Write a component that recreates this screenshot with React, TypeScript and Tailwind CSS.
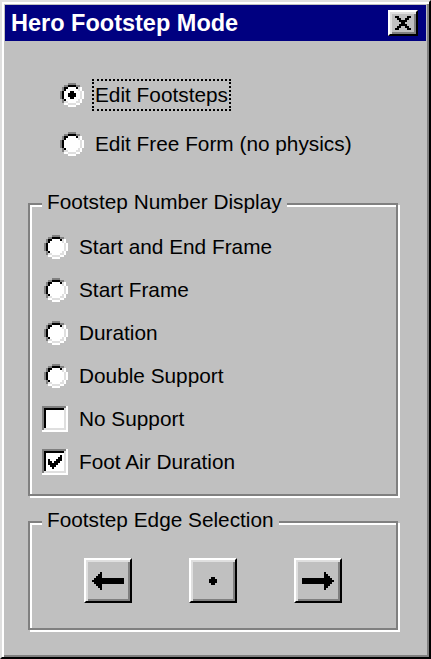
import React from "react";

type Palette = Record<string, string>;

function Pixels({ rows, palette, scale = 2 }: { rows: string[]; palette: Palette; scale?: number }) {
  const w = rows[0].length;
  const h = rows.length;
  const rects: React.ReactElement[] = [];
  rows.forEach((r, y) =>
    r.split("").forEach((c, x) => {
      if (palette[c]) rects.push(<rect key={`${x}-${y}`} x={x} y={y} width={1} height={1} fill={palette[c]} />);
    })
  );
  return (
    <svg width={w * scale} height={h * scale} viewBox={`0 0 ${w} ${h}`} shapeRendering="crispEdges" className="block shrink-0">
      {rects}
    </svg>
  );
}

const PAL: Palette = { G: "#808080", K: "#000000", W: "#ffffff", L: "#dfdfdf", D: "#000000", "#": "#000000" };

const RADIO_OFF = [
  "....GGGG....",
  "..GGKKKKGG..",
  ".GKKWWWWKLW.",
  ".GKWWWWWWLW.",
  "GKWWWWWWWWLW",
  "GKWWWWWWWWLW",
  "GKWWWWWWWWLW",
  "GKWWWWWWWWLW",
  ".GKWWWWWWLW.",
  ".GLLWWWWLLW.",
  "..WWLLLLWW..",
  "....WWWW....",
];
const RADIO_ON = [
  "....GGGG....",
  "..GGKKKKGG..",
  ".GKKWWWWKLW.",
  ".GKWWWWWWLW.",
  "GKWWWDDWWWLW",
  "GKWWDDDDWWLW",
  "GKWWDDDDWWLW",
  "GKWWWDDWWWLW",
  ".GKWWWWWWLW.",
  ".GLLWWWWLLW.",
  "..WWLLLLWW..",
  "....WWWW....",
];

const CHECK = ["......#", ".....##", "#...###", "##.###.", "#####..", ".###...", "..#...."];

function checkbox(checked: boolean): string[] {
  const rows: string[] = [];
  for (let y = 0; y < 13; y++) {
    let r = "";
    for (let x = 0; x < 13; x++) {
      let c = "W";
      if (y === 12 || x === 12) c = "W";
      else if (y === 0 || x === 0) c = "G";
      else if (y === 11 || x === 11) c = "L";
      else if (y === 1 || x === 1) c = "K";
      else {
        c = "W";
        if (checked && x >= 3 && x <= 9 && y >= 3 && y <= 9 && CHECK[y - 3][x - 3] === "#") c = "#";
      }
      r += c;
    }
    rows.push(r);
  }
  return rows;
}

const CLOSE_X = ["##....##", ".##..##.", "..####..", "...##...", "..####..", ".##..##.", "##....##"];

const LEFT_ARROW = [
  "....#...........",
  "...##...........",
  "..###...........",
  ".###############",
  "################",
  ".###############",
  "..###...........",
  "...##...........",
  "....#...........",
];
const RIGHT_ARROW = LEFT_ARROW.map((r) => r.split("").reverse().join(""));
const DOT = [".##.", "####", "####", ".##."];

const raised =
  "border-2 border-t-white border-l-white border-r-black border-b-black shadow-[inset_2px_2px_0_#dfdfdf,inset_-2px_-2px_0_#808080] bg-[#c0c0c0]";

function Radio({ checked, label, focus }: { checked?: boolean; label: string; focus?: boolean }) {
  return (
    <div className="flex items-center h-[32px]">
      <Pixels rows={checked ? RADIO_ON : RADIO_OFF} palette={PAL} />
      <span
        className={`ml-[8px] h-[32px] flex items-center px-[1px] border-2 ${
          focus ? "border-dotted border-black" : "border-transparent"
        }`}
      >
        {label}
      </span>
    </div>
  );
}

function GroupRow({ kind, checked, label }: { kind: "radio" | "check"; checked?: boolean; label: string }) {
  return (
    <div className="flex items-center h-[43px]">
      {kind === "radio" ? (
        <div className="ml-[14px]">
          <Pixels rows={checked ? RADIO_ON : RADIO_OFF} palette={PAL} />
        </div>
      ) : (
        <div className="ml-[12px]">
          <Pixels rows={checkbox(!!checked)} palette={PAL} />
        </div>
      )}
      <span className="ml-[11px]">{label}</span>
    </div>
  );
}

function Group({ title, className, children }: { title: string; className: string; children: React.ReactNode }) {
  return (
    <div
      className={`relative ml-[23px] w-[370px] border-2 border-[#808080] shadow-[inset_2px_2px_0_#fff,2px_2px_0_#fff] ${className}`}
    >
      <span className="absolute left-[12px] top-[-15px] px-[5px] bg-[#c0c0c0] leading-[24px]">{title}</span>
      {children}
    </div>
  );
}

export default function App() {
  return (
    <div className="w-[431px] h-[659px] bg-[#c0c0c0] border-2 border-t-[#dfdfdf] border-l-[#dfdfdf] border-r-black border-b-black shadow-[inset_2px_2px_0_#fff,inset_-2px_-2px_0_#808080] p-[3px] font-['Liberation_Sans',Arial,sans-serif] text-black text-[20.8px] leading-[24px] flex flex-col overflow-hidden">
      <div className="h-[36px] bg-[#000080] flex items-center justify-between pl-[6px] pr-[8px] shrink-0">
        <span className="text-white font-bold text-[23.5px] leading-[26px]">Hero Footstep Mode</span>
        <button className={`w-[30px] h-[26px] flex items-center justify-center ${raised}`}>
          <Pixels rows={CLOSE_X} palette={PAL} />
        </button>
      </div>

      <div className="ml-[55px] mt-[38px] flex flex-col gap-[17px]">
        <Radio checked focus label="Edit Footsteps" />
        <Radio label="Edit Free Form (no physics)" />
      </div>

      <div className="mt-[43px]">
        <Group title="Footstep Number Display" className="h-[293px] pt-[20px]">
          <GroupRow kind="radio" label="Start and End Frame" />
          <GroupRow kind="radio" label="Start Frame" />
          <GroupRow kind="radio" label="Duration" />
          <GroupRow kind="radio" label="Double Support" />
          <GroupRow kind="check" label="No Support" />
          <GroupRow kind="check" checked label="Foot Air Duration" />
        </Group>
      </div>

      <div className="mt-[25px]">
        <Group title="Footstep Edge Selection" className="h-[109px] pt-[35px]">
          <div className="flex justify-center gap-[57px]">
            <button className={`w-[48px] h-[45px] flex items-center justify-center ${raised}`}>
              <Pixels rows={LEFT_ARROW} palette={PAL} />
            </button>
            <button className={`w-[48px] h-[45px] flex items-center justify-center ${raised}`}>
              <Pixels rows={DOT} palette={PAL} />
            </button>
            <button className={`w-[48px] h-[45px] flex items-center justify-center ${raised}`}>
              <Pixels rows={RIGHT_ARROW} palette={PAL} />
            </button>
          </div>
        </Group>
      </div>
    </div>
  );
}
